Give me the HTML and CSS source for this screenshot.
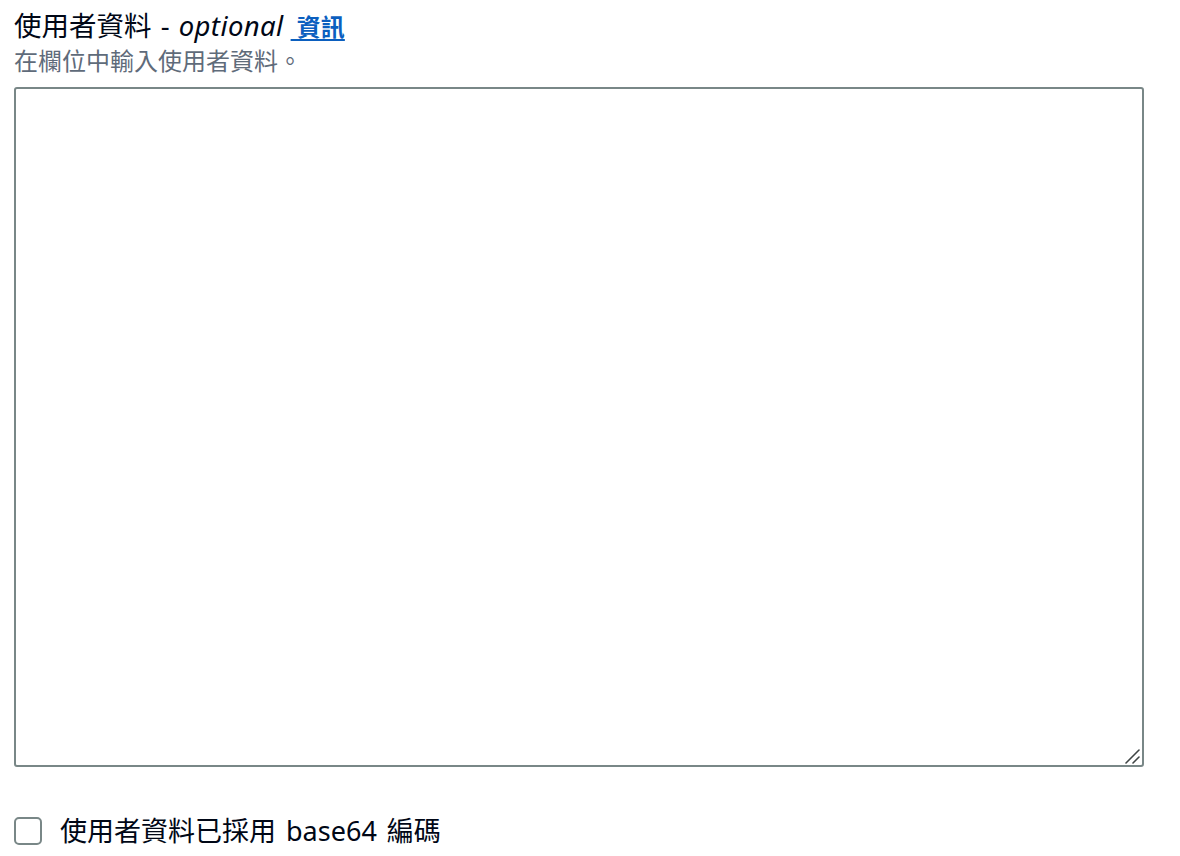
FILE: index.html
```html
<!DOCTYPE html>
<html lang="zh-Hant">
<head>
<meta charset="utf-8">
<title>使用者資料</title>
<link rel="stylesheet" href="styles.css">
</head>
<body>
<div class="field">
  <div class="label-row">
    <span class="label">使用者資料 - <i class="optional">optional</i></span>
    <a class="info" href="#">&nbsp;資訊</a>
  </div>
  <div class="description">在欄位中輸入使用者資料。</div>
  <div class="input-wrap">
    <textarea class="input"></textarea>
    <svg class="grip" width="16" height="16" viewBox="0 0 16 16" aria-hidden="true">
      <path d="M2 15 L15 2" stroke="#3f4545" stroke-width="1.6" stroke-linecap="round"/>
      <path d="M9 15 L15 9" stroke="#3f4545" stroke-width="1.6" stroke-linecap="round"/>
    </svg>
  </div>
  <label class="check">
    <span class="box"></span>
    <span class="check-text">使用者資料已採用 base64 編碼</span>
  </label>
</div>
</body>
</html>
```

FILE: styles.css
```css
html, body {
  margin: 0;
  padding: 0;
  background: #ffffff;
}
body {
  font-family: "Noto Sans", "Noto Sans CJK TC", sans-serif;
  color: #000716;
}
.field {
  display: flex;
  flex-direction: column;
  padding: 8px 0 0 14px;
  width: 1130px;
}
.label-row {
  font-size: 27.5px;
  line-height: 36px;
  display: flex;
  align-items: baseline;
}
.label {
  white-space: pre;
  word-spacing: 2px;
}
.optional {
  font-style: italic;
  letter-spacing: 0.4px;
}
.info {
  color: #0b5fbf;
  font-weight: 700;
  font-size: 24px;
  text-decoration: underline;
  text-underline-offset: 3px;
  margin-left: 7px;
}
.description {
  font-size: 24px;
  line-height: 32px;
  color: #5f6b7a;
  margin-bottom: 10px;
}
.input-wrap {
  position: relative;
  width: 1130px;
  height: 680px;
}
.input {
  display: block;
  box-sizing: border-box;
  width: 100%;
  height: 100%;
  border: 2px solid #798787;
  border-radius: 3px;
  resize: none;
  margin: 0;
  padding: 8px 12px;
  font-family: inherit;
  font-size: 24px;
  outline: none;
}
.grip {
  position: absolute;
  right: 4px;
  bottom: 3px;
  pointer-events: none;
}
.check {
  display: flex;
  align-items: center;
  gap: 18px;
  margin-top: 46px;
}
.box {
  box-sizing: border-box;
  width: 28px;
  height: 28px;
  border: 2px solid #798787;
  border-radius: 5px;
  flex: none;
}
.check-text {
  font-size: 27px;
  line-height: 36px;
  word-spacing: 3px;
}
```
